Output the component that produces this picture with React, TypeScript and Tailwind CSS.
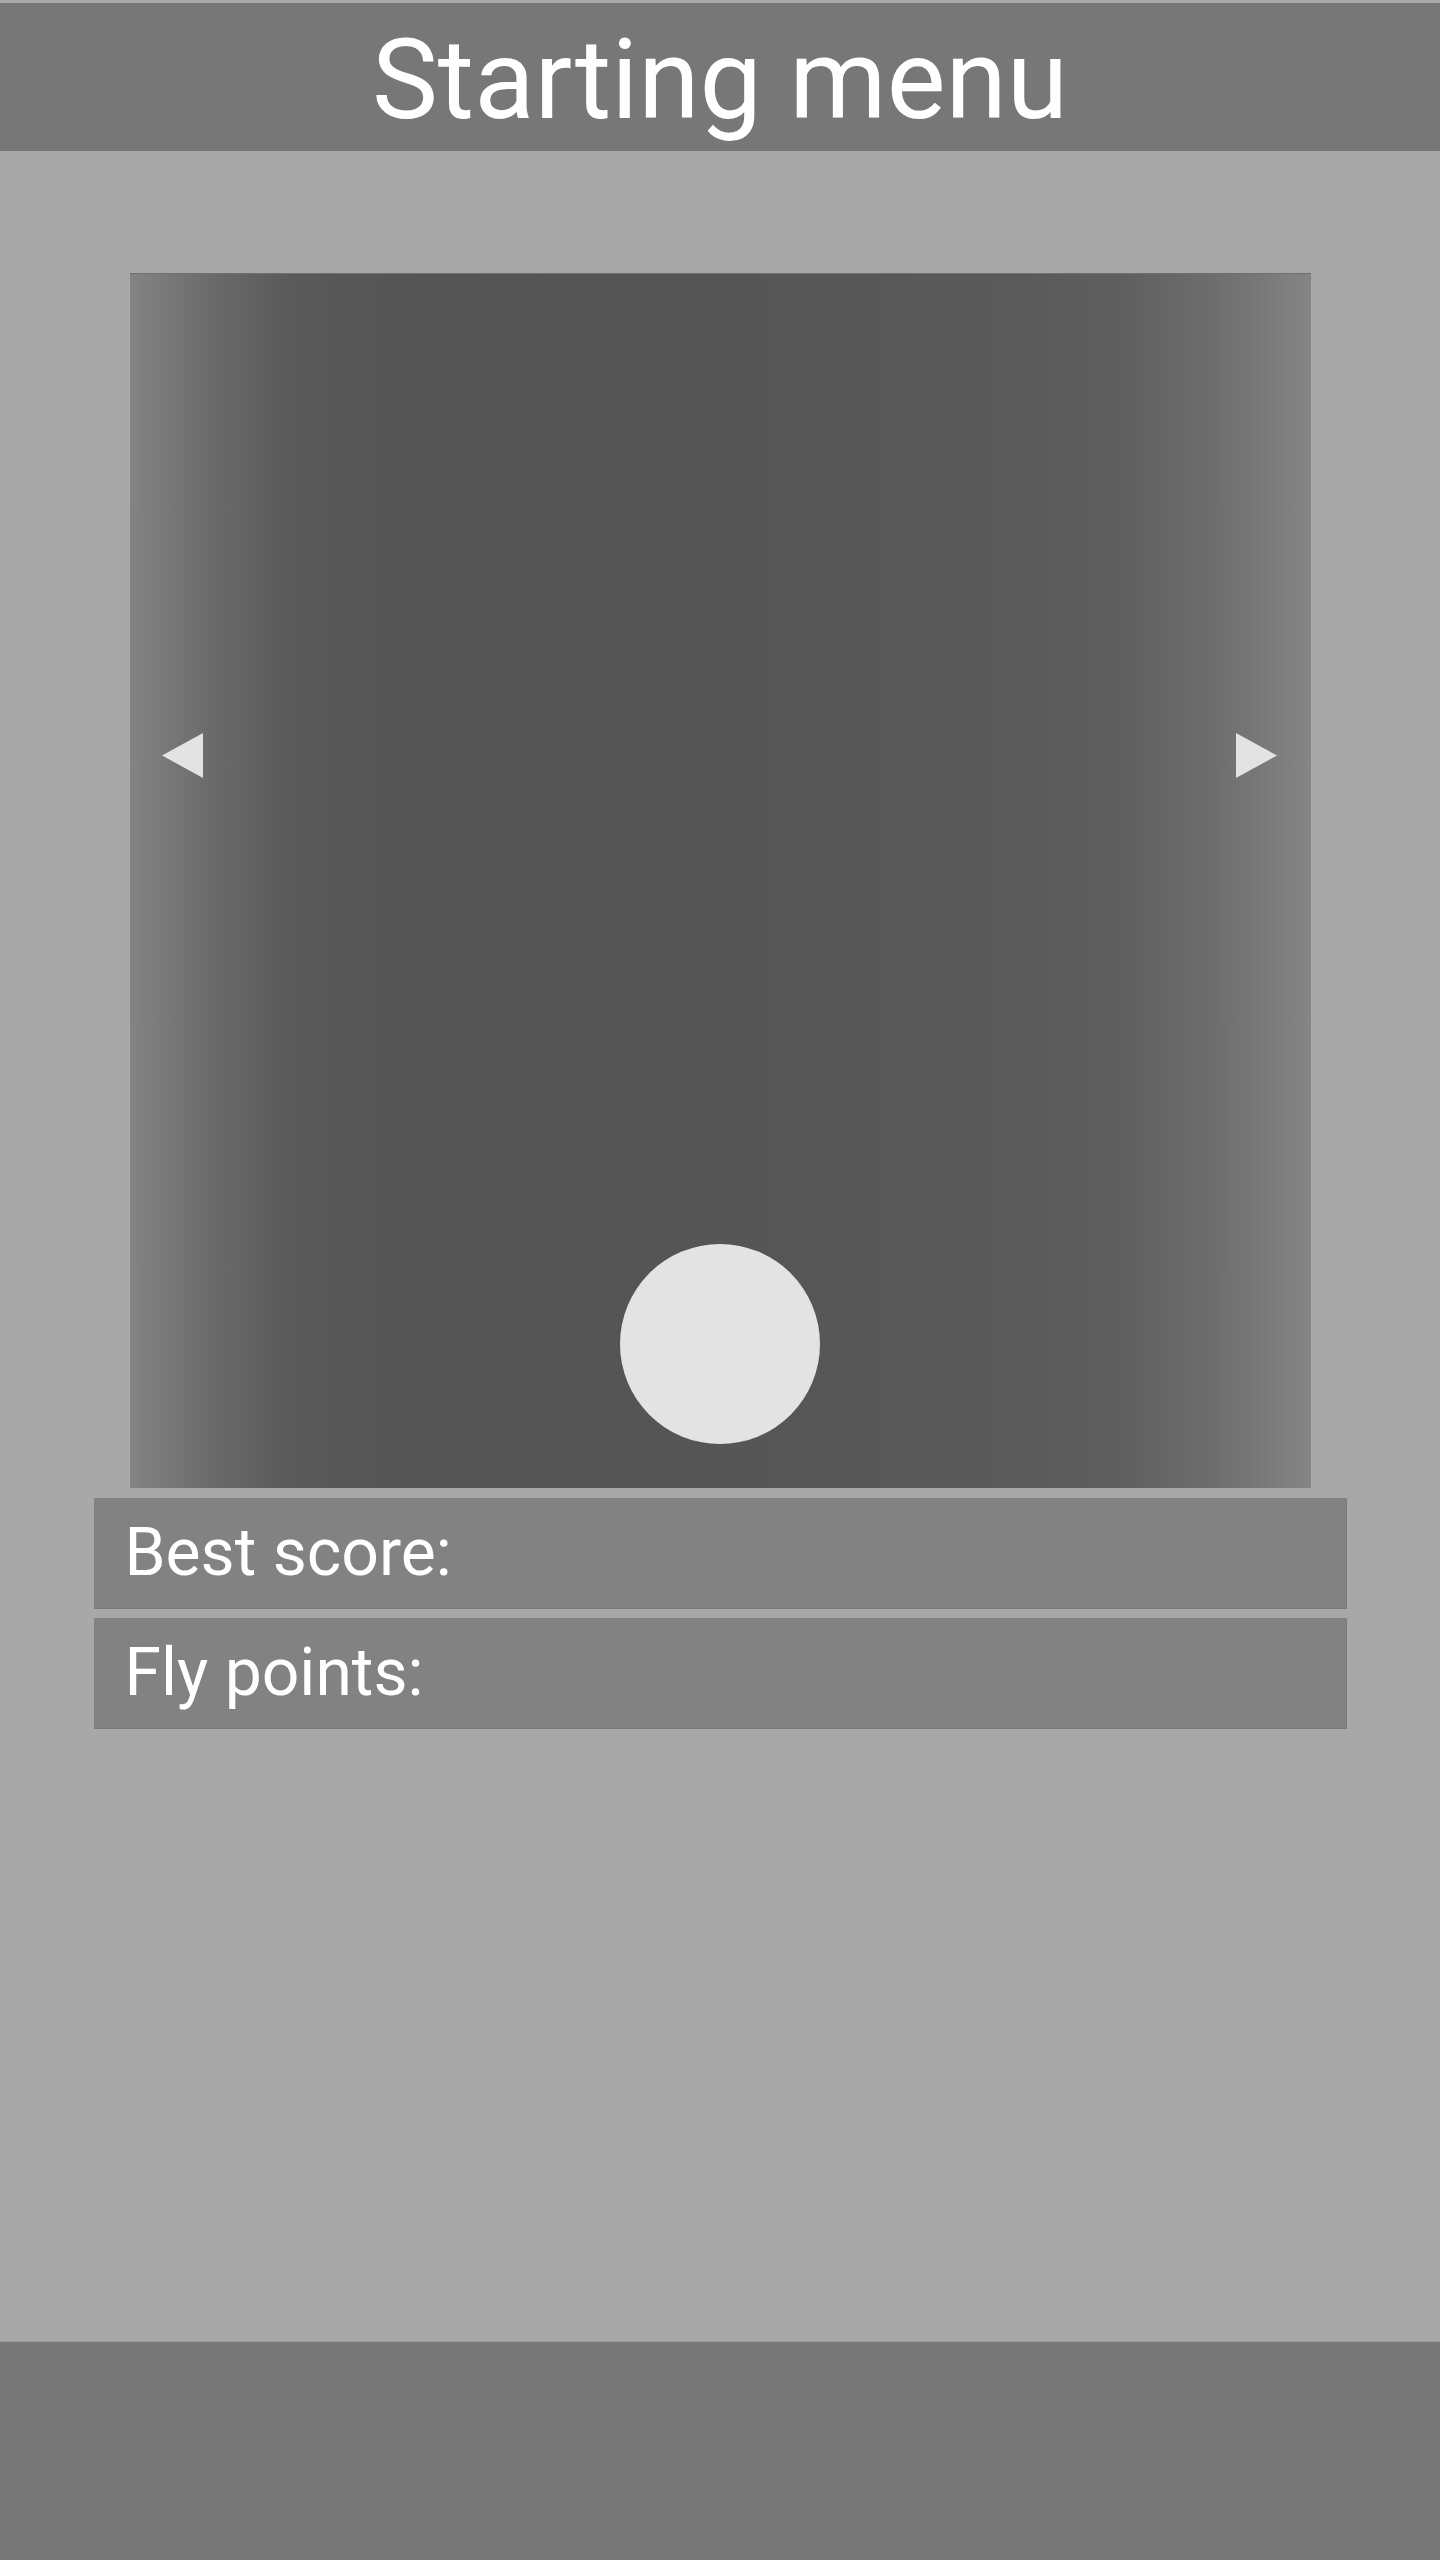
import React from 'react';

const font = { fontFamily: 'Roboto, "Noto Sans", sans-serif' };

const Arrow = ({ dir }: { dir: 'left' | 'right' }) => (
  <svg width="41" height="45" viewBox="0 0 41 45" className="block">
    {dir === 'left' ? (
      <polygon points="0,22.5 41,0 41,45" fill="#e3e3e3" />
    ) : (
      <polygon points="0,0 41,22.5 0,45" fill="#e3e3e3" />
    )}
  </svg>
);

const StatRow = ({ label }: { label: string }) => (
  <div className="flex h-[111px] items-center border-r border-b border-[#7b7b7b] bg-[#828282] pl-[31px] pb-[1px]">
    <span className="text-[66px] leading-none text-white">{label}</span>
  </div>
);

const App = () => {
  return (
    <div className="flex min-h-[2560px] flex-col bg-[#a8a8a8] pt-[3px]" style={font}>
      <header className="flex h-[148px] items-center justify-center bg-[#777777] pt-[6px]">
        <h1 className="text-[111px] font-normal leading-none text-white">Starting menu</h1>
      </header>

      <main className="flex flex-1 flex-col items-center pt-[122px]">
        <div className="flex h-[1215px] w-[1181px] flex-col border-t border-[#6e6e6e] bg-[linear-gradient(to_right,#848484_0%,#6a6a6a_7%,#595959_14%,#545454_25%,#555555_50%,#5a5a5a_75%,#5f5f5f_84%,#6e6e6e_92%,#858585_100%)] pt-[459px] pb-[44px]">
          <div className="flex items-center justify-between pl-[32px] pr-[34px]">
            <Arrow dir="left" />
            <Arrow dir="right" />
          </div>
          <div className="flex-1" />
          <div className="flex justify-center">
            <div className="h-[200px] w-[200px] rounded-full bg-[#e3e3e3]" />
          </div>
        </div>

        <div className="mt-[10px] flex w-[1253px] flex-col gap-[9px]">
          <StatRow label="Best score:" />
          <StatRow label="Fly points:" />
        </div>
      </main>

      <footer className="h-[219px] border-t border-[#9c9c9c] bg-[#777777]" />
    </div>
  );
};

export default App;
